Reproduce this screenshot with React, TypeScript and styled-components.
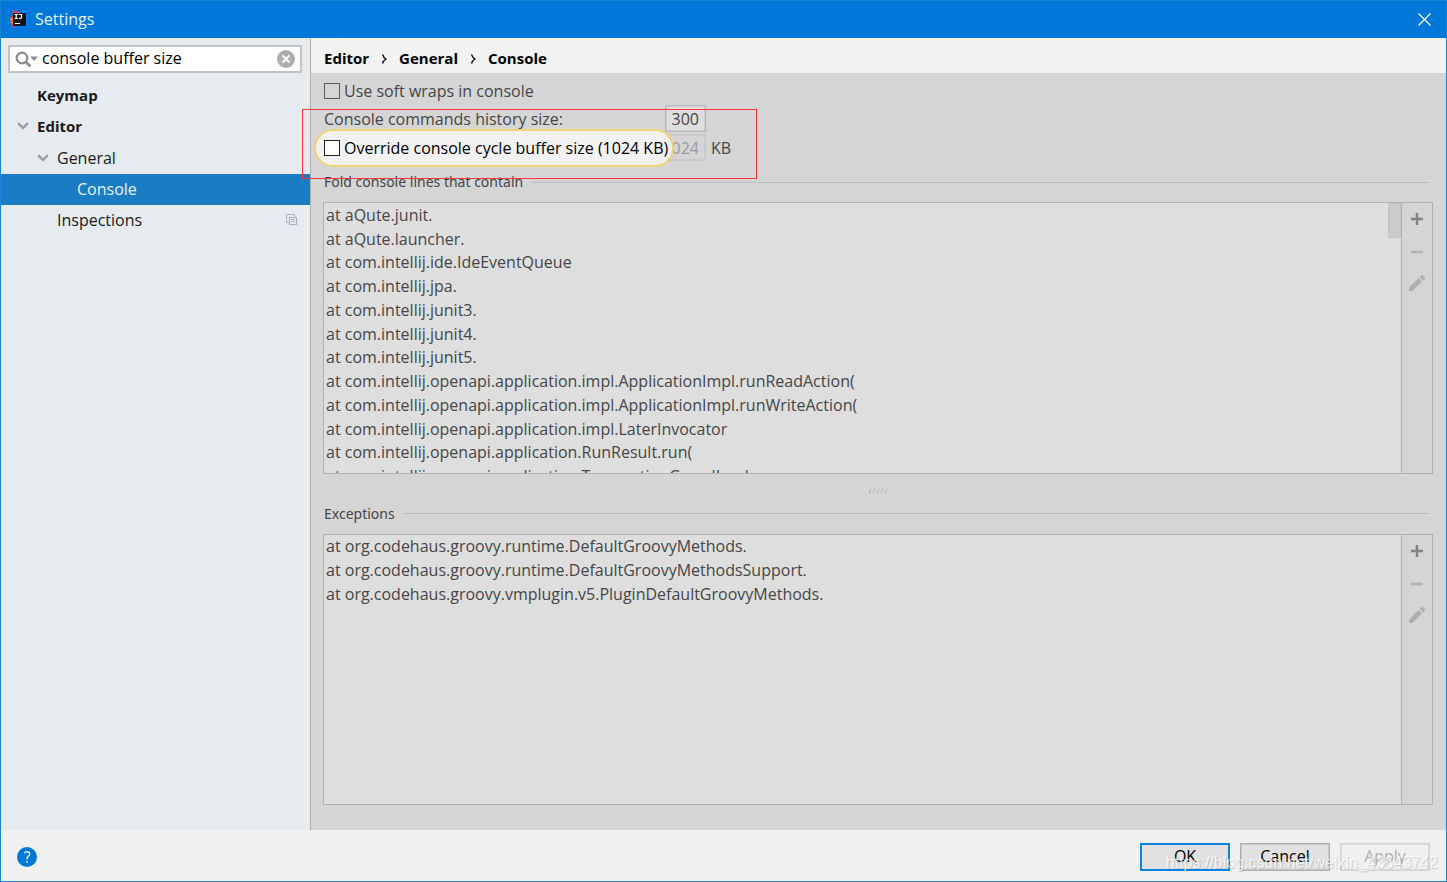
import React from "react";
import styled, { createGlobalStyle, css } from "styled-components";

const GlobalStyle = createGlobalStyle`
  *, *::before, *::after { box-sizing: border-box; }
  body { margin: 0; }
  body, button, input { font-family: "Open Sans", "Noto Sans", sans-serif; font-size: 16px; line-height: 20px; }
`;

const Window = styled.div`
  display: flex;
  flex-direction: column;
  height: 100vh;
  border: 1px solid #1883d7;
  background: #f0f0f0;
  color: #1a1a1a;
  overflow: hidden;
`;

const TitleBar = styled.header`
  display: flex;
  align-items: center;
  flex: none;
  height: 37px;
  padding: 0 15px 1px 9px;
  background: #0078d9;
  color: #e8f2fb;
`;

const WindowTitle = styled.h1`
  flex: 1;
  margin: 0 0 0 7px;
  font-size: 16px;
  font-weight: 400;
`;

const IconButton = styled.button`
  display: flex;
  align-items: center;
  justify-content: center;
  padding: 0;
  border: 0;
  background: none;
`;

const Body = styled.div`
  display: flex;
  flex: 1;
  min-height: 0;
`;

const Sidebar = styled.aside`
  flex: none;
  width: 310px;
  padding-top: 7px;
  border-right: 1px solid #adadad;
  background: #e5ebef;
`;

const SearchBox = styled.div`
  display: flex;
  align-items: center;
  height: 28px;
  margin: 0 8px 8px 7px;
  padding: 0 5px;
  border: 2px solid #c3c3c3;
  background: #fff;
`;

const SearchInput = styled.input`
  flex: 1;
  min-width: 0;
  padding: 0 0 2px;
  margin-left: 3px;
  border: 0;
  outline: 0;
  background: none;
  color: #000;
`;

const Tree = styled.ul`
  margin: 0;
  padding: 0;
  list-style: none;
`;

const TreeItem = styled.li<{ $level: number; $bold?: boolean; $selected?: boolean }>`
  display: flex;
  align-items: center;
  gap: 8px;
  height: 31px;
  padding: 0 12px ${(p) => (p.$bold ? 4 : 2)}px ${(p) => 16 + p.$level * 20}px;
  font-size: ${(p) => (p.$bold ? 15 : 16)}px;
  font-weight: ${(p) => (p.$bold ? 700 : 400)};
  ${(p) =>
    p.$selected &&
    css`
      background: #1a7dc4;
      color: #e9f3fa;
    `}
`;

const TreeLabel = styled.span`
  flex: 1;
`;

const ChevronSlot = styled.span`
  display: flex;
  width: 12px;
`;

const Main = styled.main`
  position: relative;
  display: flex;
  flex: 1;
  flex-direction: column;
  min-width: 0;
  background: #d5d5d5;
  color: #464646;
`;

const Breadcrumbs = styled.nav`
  display: flex;
  align-items: center;
  gap: 12px;
  flex: none;
  height: 35px;
  padding: 5px 13px 0;
  background: #f2f2f2;
  color: #000;
  font-size: 15px;
  font-weight: 700;
`;

const Content = styled.div`
  display: flex;
  flex: 1;
  flex-direction: column;
  min-height: 0;
  padding: 6px 13px 25px 12px;
`;

const Options = styled.div`
  display: grid;
  grid-template-rows: 24px 27px 27px;
  row-gap: 2px;
  flex: none;
  margin-bottom: 11px;
`;

const OptionRow = styled.div`
  display: flex;
  align-items: center;
`;

const OptionLabel = styled.label`
  width: 342px;
  padding-left: 1px;
`;

const CheckLabel = styled.label<{ $spot?: boolean }>`
  position: relative;
  z-index: 1;
  display: flex;
  align-items: center;
  gap: 4px;
  width: 342px;
  padding-left: 1px;
  white-space: nowrap;
  ${(p) =>
    p.$spot &&
    css`
      color: #000;
      &::before {
        content: "";
        position: absolute;
        z-index: -1;
        inset: -9px;
        border: 2px solid #f0d27a;
        border-radius: 19px;
        background: #f2f2f2;
      }
    `}
`;

const Checkbox = styled.input<{ $bright?: boolean }>`
  appearance: none;
  flex: none;
  width: 16px;
  height: 16px;
  margin: 0;
  border: 1px solid ${(p) => (p.$bright ? "#222" : "#5c5c5c")};
  background: ${(p) => (p.$bright ? "#fff" : "transparent")};
`;

const NumberField = styled.input`
  width: 41px;
  height: 27px;
  padding: 0 6px;
  border: 1px solid #b9b9b9;
  outline: 1px solid #cbcbcb;
  outline-offset: -2px;
  background: #dedede;
  color: #464646;
  direction: rtl;
  &:disabled {
    border-color: #c6c6c6;
    background: #d5d5d5;
    color: #9a9a9a;
  }
`;

const Unit = styled.span`
  margin-left: 5px;
`;

const Group = styled.section`
  display: flex;
  flex: 1;
  flex-direction: column;
  min-height: 0;
`;

const GroupTitle = styled.h2`
  display: flex;
  align-items: center;
  gap: 8px;
  flex: none;
  height: 20px;
  margin: 0 3px 10px 1px;
  font-family: "Noto Sans", sans-serif;
  font-size: 14px;
  font-weight: 400;
  &::after {
    content: "";
    flex: 1;
    height: 1px;
    background: #bcbcbc;
  }
`;

const ListFrame = styled.div`
  display: flex;
  flex: 1;
  min-height: 0;
  border: 1px solid #b2b2b2;
`;

const ListPane = styled.div`
  position: relative;
  flex: 1;
  overflow: hidden;
  padding-left: 2px;
  background: #dedede;
`;

const Lines = styled.ul<{ $height: number; $count: number }>`
  display: grid;
  grid-template-rows: repeat(${(p) => p.$count}, 1fr);
  align-items: center;
  height: ${(p) => p.$height}px;
  margin: 0;
  padding: 0;
  list-style: none;
`;

const ScrollThumb = styled.span`
  position: absolute;
  top: 0;
  right: 0;
  width: 13px;
  height: 35px;
  border: 1px solid #c4c4c4;
  background: #cbcbcb;
`;

const Tools = styled.div`
  display: flex;
  flex-direction: column;
  align-items: center;
  gap: 12px;
  flex: none;
  width: 31px;
  padding-top: 6px;
  border-left: 1px solid #b2b2b2;
`;

const Splitter = styled.div`
  display: flex;
  align-items: center;
  justify-content: center;
  flex: none;
  height: 30px;
  padding-top: 4px;
`;

const Annotation = styled.div`
  position: absolute;
  z-index: 2;
  top: 71px;
  left: -9px;
  width: 455px;
  height: 70px;
  border: 1px solid #f7383c;
  pointer-events: none;
`;

const Footer = styled.footer`
  position: relative;
  display: flex;
  align-items: center;
  gap: 10px;
  flex: none;
  height: 51px;
  padding: 3px 16px 0;
  background: #f0f0f0;
`;

const HelpButton = styled(IconButton)`
  width: 20px;
  height: 20px;
  margin-right: auto;
  border-radius: 50%;
  background: #0078d7;
  color: #fff;
`;

const DialogButton = styled.button<{ $primary?: boolean }>`
  width: 90px;
  height: 28px;
  padding: 0 0 2px;
  border: ${(p) => (p.$primary ? "2px solid #0a84de" : "1px solid #adadad")};
  outline: ${(p) => (p.$primary ? "0" : "1px solid #c9c9c9")};
  outline-offset: -2px;
  background: #e1e1e1;
  color: #000;
  &:disabled {
    border-color: #d2d2d2;
    outline-color: #dedede;
    background: #efefef;
    color: #b0b0b0;
  }
`;

const Watermark = styled.span`
  position: absolute;
  right: 8px;
  bottom: 8px;
  color: rgba(255, 255, 255, 0.75);
  font: 16px/20px "Liberation Sans", sans-serif;
  text-shadow: 1px 1px 1px rgba(0, 0, 0, 0.16);
  pointer-events: none;
`;

const Logo = () => (
  <svg width="18" height="18" viewBox="0 0 18 18" aria-hidden="true">
    <path d="M3 0l7 2-5 15-2 1-2-6 1-3z" fill="#f0386b" />
    <path d="M0 7l4 2v6l-3-2z" fill="#fc801d" />
    <path d="M10 1l4-1 4 4v11l-4 3-6-1z" fill="#087cfa" />
    <rect x="3" y="3" width="13" height="13" fill="#141414" />
    <path d="M4.500 4.500h3.500M6.200 4.500v4M4.500 8.500h3.500M9 4.500h3M11.500 4.500v3q0 1-2.500 1M5 13.500h5" stroke="#fff" strokeWidth="1.200" fill="none" />
  </svg>
);

const Chevron = () => (
  <svg width="12" height="8" viewBox="0 0 12 8" aria-hidden="true">
    <path d="M1.200 1.200L6 6l4.800-4.800" stroke="#9a9da0" strokeWidth="2.400" fill="none" />
  </svg>
);

const CrumbArrow = () => (
  <svg width="6" height="11" viewBox="0 0 6 11" aria-hidden="true">
    <path d="M1.500 1.500q1 3 3.500 4.500-2.500 1.500-3.500 4.500" stroke="#111" strokeWidth="1.400" fill="none" />
  </svg>
);

const SearchIcon = () => (
  <svg width="24" height="18" viewBox="0 0 24 18" aria-hidden="true">
    <circle cx="7" cy="8" r="5.300" stroke="#8f8f8f" strokeWidth="2.400" fill="none" />
    <path d="M11 12l4.500 4.500" stroke="#8f8f8f" strokeWidth="2.800" />
    <path d="M15 6.500h8l-4 4.500z" fill="#8f8f8f" />
  </svg>
);

const ClearIcon = () => (
  <svg width="18" height="18" viewBox="0 0 18 18" aria-hidden="true">
    <circle cx="9" cy="9" r="9" fill="#adadad" />
    <path d="M5.500 5.500l7 7M12.500 5.500l-7 7" stroke="#fff" strokeWidth="2" />
  </svg>
);

const CopyIcon = () => (
  <svg width="12" height="12" viewBox="0 0 12 12" fill="none" stroke="#a9b2b9" aria-hidden="true">
    <path d="M2.500 8.500h-2v-8h8v2" />
    <rect x="3.500" y="3.500" width="7" height="7" />
    <path d="M5 5.500h4M5 7.500h4" />
  </svg>
);

const CloseIcon = () => (
  <svg width="13" height="13" viewBox="0 0 13 13" aria-hidden="true">
    <path d="M.5.5l12 12M12.500.5l-12 12" stroke="#fff" strokeWidth="1.200" />
  </svg>
);

const PlusIcon = () => (
  <svg width="20" height="20" viewBox="0 0 20 20" aria-hidden="true">
    <path d="M4 10h12M10 4v12" stroke="#828282" strokeWidth="2.400" />
  </svg>
);

const MinusIcon = () => (
  <svg width="20" height="20" viewBox="0 0 20 20" aria-hidden="true">
    <path d="M4 11h12" stroke="#b3b3b3" strokeWidth="2.400" />
  </svg>
);

const PencilIcon = () => (
  <svg width="20" height="20" viewBox="0 0 20 20" fill="#b0b0b0" aria-hidden="true">
    <path d="M2 14.500L11.500 5l3.500 3.500L5.500 18H2z" />
    <path d="M12.500 4l1.700-1.700q.8-.6 1.600 0l2 2q.6.800 0 1.600L16 7.500z" />
  </svg>
);

const GripIcon = () => (
  <svg width="20" height="6" viewBox="0 0 20 6" aria-hidden="true">
    <path d="M1 5.500l2-5M5 5.500l2-5M9 5.500l2-5M13 5.500l2-5M17 5.500l2-5" stroke="#aaa" strokeWidth="1.200" strokeDasharray="1.500 1" />
  </svg>
);

const HelpIcon = () => (
  <svg width="20" height="20" viewBox="0 0 20 20" fill="none" aria-hidden="true">
    <path d="M7.300 6.200Q8 4.700 10 4.700q2.700 0 2.700 2.400 0 1.300-1.500 2.300T10 12.500" stroke="#fff" strokeWidth="1.300" />
    <path d="M9.200 14.200h1.600v1.600H9.200z" fill="#fff" />
  </svg>
);

const foldLines = [
  "at aQute.junit.",
  "at aQute.launcher.",
  "at com.intellij.ide.IdeEventQueue",
  "at com.intellij.jpa.",
  "at com.intellij.junit3.",
  "at com.intellij.junit4.",
  "at com.intellij.junit5.",
  "at com.intellij.openapi.application.impl.ApplicationImpl.runReadAction(",
  "at com.intellij.openapi.application.impl.ApplicationImpl.runWriteAction(",
  "at com.intellij.openapi.application.impl.LaterInvocator",
  "at com.intellij.openapi.application.RunResult.run(",
  "at com.intellij.openapi.application.TransactionGuardImpl",
];

const exceptionLines = [
  "at org.codehaus.groovy.runtime.DefaultGroovyMethods.",
  "at org.codehaus.groovy.runtime.DefaultGroovyMethodsSupport.",
  "at org.codehaus.groovy.vmplugin.v5.PluginDefaultGroovyMethods.",
];

interface PatternGroupProps {
  title: string;
  lines: string[];
  height: number;
  scrollable?: boolean;
}

const PatternGroup = ({ title, lines, height, scrollable }: PatternGroupProps) => (
  <Group>
    <GroupTitle>{title}</GroupTitle>
    <ListFrame>
      <ListPane>
        <Lines $height={height} $count={lines.length}>
          {lines.map((line) => (
            <li key={line}>{line}</li>
          ))}
        </Lines>
        {scrollable && <ScrollThumb />}
      </ListPane>
      <Tools>
        <IconButton aria-label="Add"><PlusIcon /></IconButton>
        <IconButton aria-label="Remove" disabled><MinusIcon /></IconButton>
        <IconButton aria-label="Edit" disabled><PencilIcon /></IconButton>
      </Tools>
    </ListFrame>
  </Group>
);

export default function App() {
  return (
    <>
      <GlobalStyle />
      <Window>
        <TitleBar>
          <Logo />
          <WindowTitle>Settings</WindowTitle>
          <IconButton aria-label="Close"><CloseIcon /></IconButton>
        </TitleBar>
        <Body>
          <Sidebar>
            <SearchBox>
              <SearchIcon />
              <SearchInput aria-label="Search settings" defaultValue="console buffer size" />
              <IconButton aria-label="Clear search"><ClearIcon /></IconButton>
            </SearchBox>
            <Tree>
              <TreeItem $level={0} $bold><ChevronSlot /><TreeLabel>Keymap</TreeLabel></TreeItem>
              <TreeItem $level={0} $bold><ChevronSlot><Chevron /></ChevronSlot><TreeLabel>Editor</TreeLabel></TreeItem>
              <TreeItem $level={1}><ChevronSlot><Chevron /></ChevronSlot><TreeLabel>General</TreeLabel></TreeItem>
              <TreeItem $level={2} $selected><ChevronSlot /><TreeLabel>Console</TreeLabel></TreeItem>
              <TreeItem $level={1}><ChevronSlot /><TreeLabel>Inspections</TreeLabel><CopyIcon /></TreeItem>
            </Tree>
          </Sidebar>
          <Main>
            <Breadcrumbs aria-label="Breadcrumb">
              <span>Editor</span>
              <CrumbArrow />
              <span>General</span>
              <CrumbArrow />
              <span>Console</span>
            </Breadcrumbs>
            <Content>
              <Options>
                <OptionRow>
                  <CheckLabel><Checkbox type="checkbox" />Use soft wraps in console</CheckLabel>
                </OptionRow>
                <OptionRow>
                  <OptionLabel htmlFor="history">Console commands history size:</OptionLabel>
                  <NumberField id="history" defaultValue="300" />
                </OptionRow>
                <OptionRow>
                  <CheckLabel $spot><Checkbox type="checkbox" $bright />Override console cycle buffer size (1024 KB)</CheckLabel>
                  <NumberField aria-label="Buffer size in KB" defaultValue="1024" disabled />
                  <Unit>KB</Unit>
                </OptionRow>
              </Options>
              <PatternGroup title="Fold console lines that contain" lines={foldLines} height={285} scrollable />
              <Splitter><GripIcon /></Splitter>
              <PatternGroup title="Exceptions" lines={exceptionLines} height={71} />
            </Content>
            <Annotation />
          </Main>
        </Body>
        <Footer>
          <HelpButton aria-label="Help"><HelpIcon /></HelpButton>
          <DialogButton $primary>OK</DialogButton>
          <DialogButton>Cancel</DialogButton>
          <DialogButton disabled>Apply</DialogButton>
          <Watermark>https://blog.csdn.net/weixin_43643742</Watermark>
        </Footer>
      </Window>
    </>
  );
}
